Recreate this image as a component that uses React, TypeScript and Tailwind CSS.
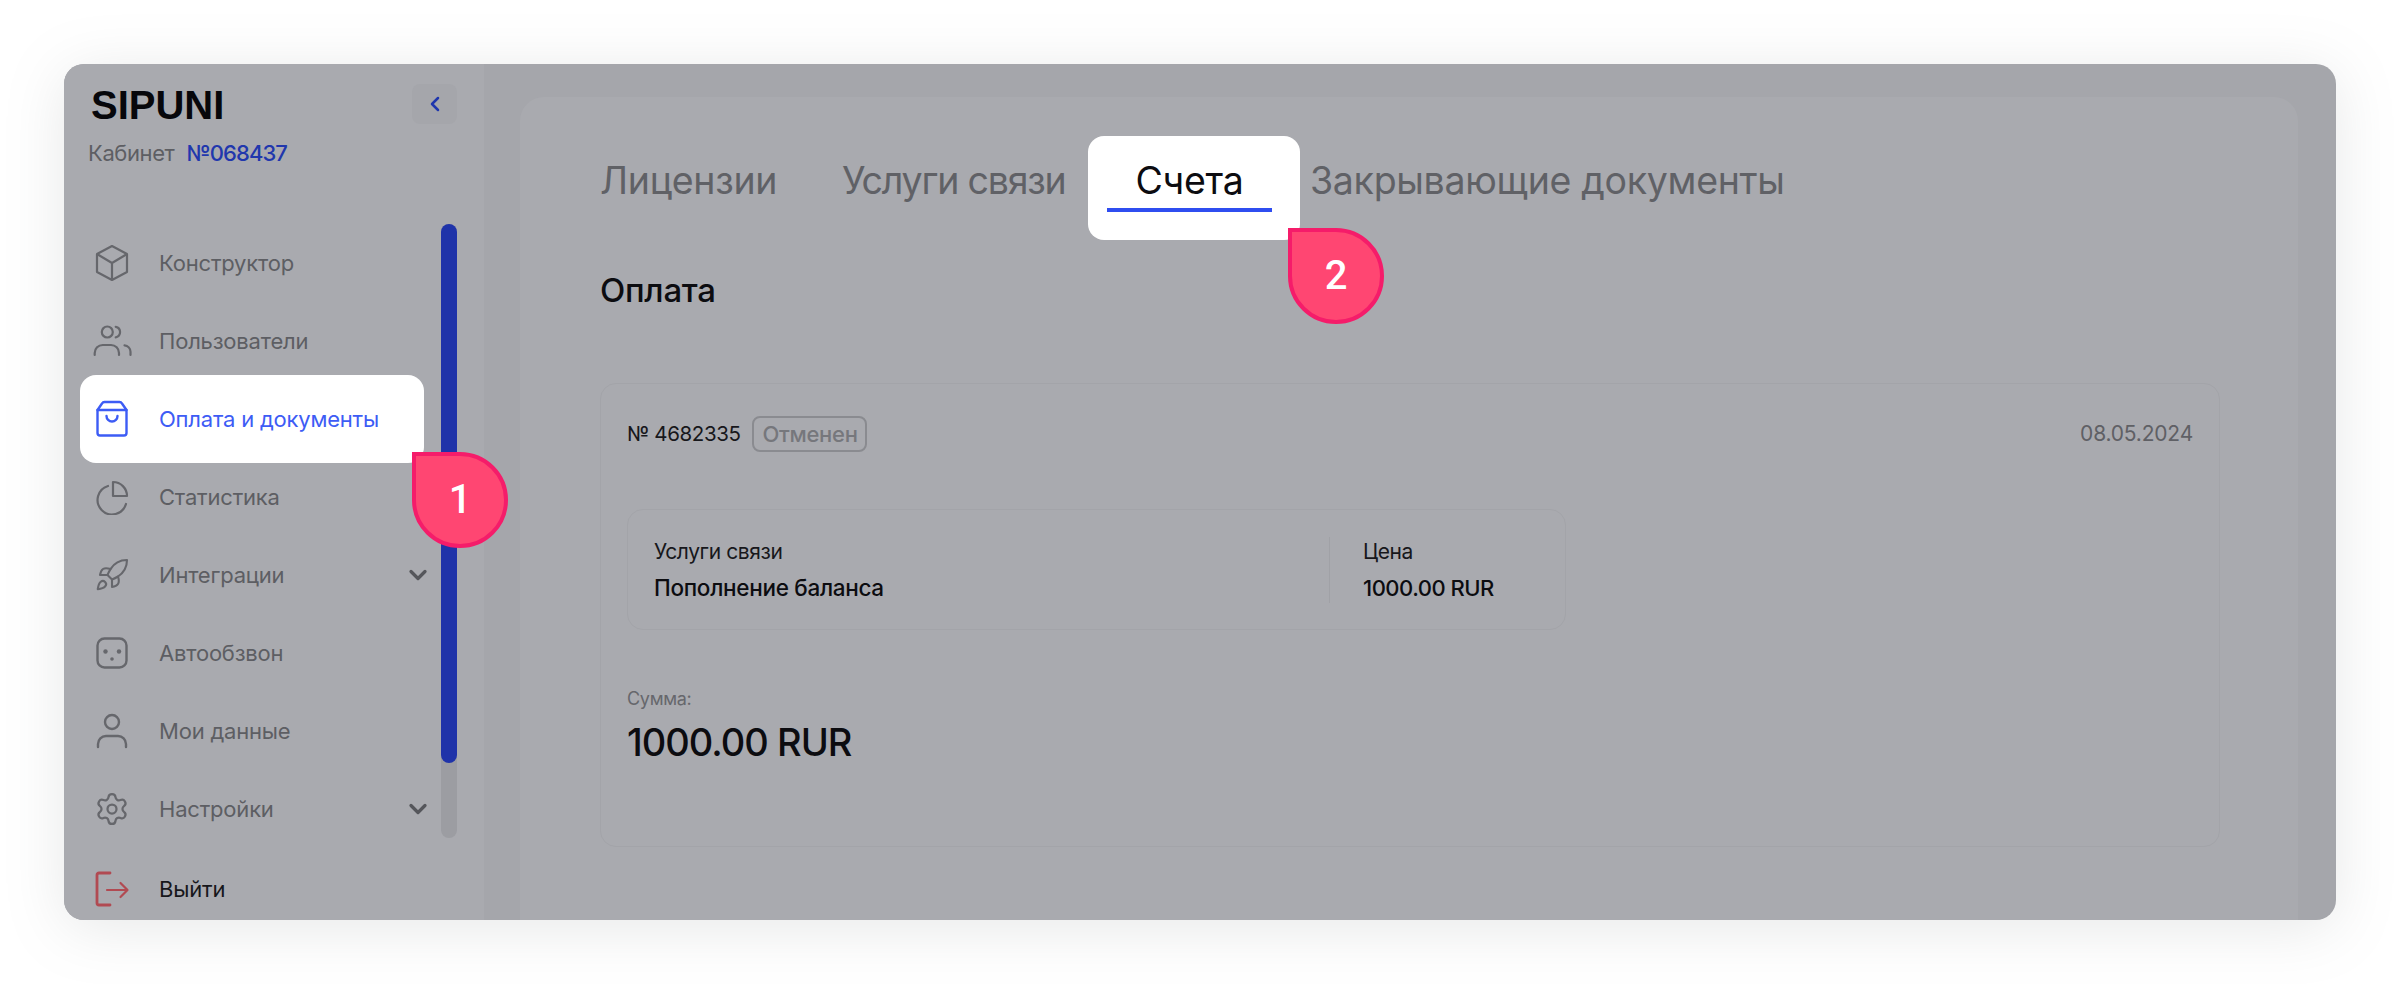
import React from 'react';
import { Rocket, Settings, ChevronDown, ChevronLeft } from 'lucide-react';

const GRAY = '#66676c';

const CubeIcon = () => (
  <svg width="36" height="38" viewBox="0 0 36 38" fill="none" stroke={GRAY} strokeWidth="2.2" strokeLinejoin="round">
    <path d="M18 2 L33 10 V28 L18 36 L3 28 V10 Z" />
    <path d="M3 10 L18 19 L33 10 M18 19 V36" />
  </svg>
);

const UsersIcon = () => (
  <svg width="40" height="36" viewBox="0 0 40 36" fill="none" stroke={GRAY} strokeWidth="2.2" strokeLinecap="round">
    <circle cx="15.3" cy="9" r="5.5" />
    <path d="M23.7 3.8 a5.4 5.4 0 0 1 0 10.6" />
    <path d="M2.7 32 v-2 a8 8 0 0 1 8-8 h8.3 a8 8 0 0 1 8 8 v2" />
    <path d="M32.5 22.3 a6.5 6.5 0 0 1 6 6.5 v3.2" />
  </svg>
);

const BagIcon = () => (
  <svg width="36" height="40" viewBox="0 0 36 40" fill="none" stroke="#3d5cf5" strokeWidth="2.4" strokeLinejoin="round" strokeLinecap="round">
    <path d="M3.5 11 H32.5 V34 a2.5 2.5 0 0 1 -2.5 2.5 H6 a2.5 2.5 0 0 1 -2.5 -2.5 Z" />
    <path d="M3.5 11 L8 4.5 a3 3 0 0 1 2.5 -1.5 H25.500 a3 3 0 0 1 2.500 1.500 L32.500 11" />
    <path d="M12.500 17 a5.500 5.500 0 0 0 11 0" />
  </svg>
);

const PieIcon = () => (
  <svg width="36" height="36" viewBox="0 0 36 36" fill="none" stroke={GRAY} strokeWidth="2.2" strokeLinejoin="round" strokeLinecap="round">
    <path d="M19 3 a14 14 0 0 1 14 14 H19 Z" />
    <path d="M14 7 a14.500 14.500 0 1 0 18 18" />
  </svg>
);

const SocketIcon = () => (
  <svg width="36" height="36" viewBox="0 0 36 36" fill="none" stroke={GRAY} strokeWidth="2.4">
    <rect x="3.500" y="3.500" width="29" height="29" rx="7" />
    <circle cx="11.500" cy="16.500" r="2.200" fill={GRAY} stroke="none" />
    <circle cx="25" cy="16.500" r="2.200" fill={GRAY} stroke="none" />
    <circle cx="18" cy="24" r="1.800" fill={GRAY} stroke="none" />
  </svg>
);

const UserIcon = () => (
  <svg width="36" height="38" viewBox="0 0 36 38" fill="none" stroke={GRAY} strokeWidth="2.400" strokeLinecap="round">
    <circle cx="18" cy="10" r="7" />
    <path d="M4 35 v-3 a8 8 0 0 1 8-8 h12 a8 8 0 0 1 8 8 v3" />
  </svg>
);

const LogoutIcon = () => (
  <svg width="38" height="38" viewBox="0 0 38 38" fill="none" stroke="#b14a52" strokeLinecap="round" strokeLinejoin="round">
    <path d="M17 3 H6 a2 2 0 0 0 -2 2 V33 a2 2 0 0 0 2 2 H17" strokeWidth="2.800" />
    <path d="M14 20 H34 M27.500 13 L34.500 20 L27.500 27" strokeWidth="2.200" />
  </svg>
);

const navItems = [
  { label: 'Конструктор', icon: <CubeIcon /> },
  { label: 'Пользователи', icon: <UsersIcon /> },
  { label: 'Оплата и документы', icon: <BagIcon />, active: true },
  { label: 'Статистика', icon: <PieIcon /> },
  { label: 'Интеграции', icon: <Rocket size={36} strokeWidth={1.4} color={GRAY} />, more: true },
  { label: 'Автообзвон', icon: <SocketIcon /> },
  { label: 'Мои данные', icon: <UserIcon /> },
  { label: 'Настройки', icon: <Settings size={36} strokeWidth={1.5} color={GRAY} />, more: true },
];

const Marker: React.FC<{ n: number; className: string }> = ({ n, className }) => (
  <div
    className={`absolute z-10 flex h-24 w-24 items-center justify-center rounded-full rounded-tl-none border-4 border-[#f51c6a] bg-[#ff4672] text-[40px] font-medium text-white font-['Roboto',sans-serif] ${className}`}
  >
    {n}
  </div>
);

const Sidebar: React.FC = () => (
  <aside className="relative flex w-[420px] shrink-0 flex-col bg-[#a9aaaf]">
    <div className="flex items-start justify-between pl-[27px] pr-[27px] pt-[17px]">
      <span className="text-[40px] font-bold leading-[48px] text-[#07070b] font-['Liberation_Sans',sans-serif]">
        SIPUNI
      </span>
      <button className="mt-[3px] flex h-10 w-[45px] items-center justify-center rounded-lg bg-[#a5a6ab] text-[#1f36ad]">
        <ChevronLeft size={24} strokeWidth={2.500} />
      </button>
    </div>
    <div className="mx-6 mt-[12px] flex items-center gap-3 text-[22px] leading-6">
      <span className="tracking-[-0.4px] text-[#5d5e63]">Кабинет</span>
      <span className="font-medium tracking-[-0.9px] text-[#2137ad]">№068437</span>
    </div>
    <div className="mx-6 mt-[32px] h-px bg-[#93949a]" />
    <div className="mt-[27px] flex pl-4 pr-[27px]">
      <nav className="w-[344px]">
        {navItems.map((item) => (
          <div
            key={item.label}
            className={
              item.active
                ? 'relative -my-[5px] flex h-[88px] items-center rounded-2xl bg-white pl-3 text-[#3d5cf5]'
                : 'flex h-[78px] items-center pl-3 text-[#5d5e63]'
            }
          >
            <div className="flex w-10 justify-center">{item.icon}</div>
            <span className="ml-[27px] flex-1 text-[22px] tracking-[-0.2px]">{item.label}</span>
            {item.more && <ChevronDown size={28} strokeWidth={2.800} className="-mr-2 text-[#55565b]" />}
          </div>
        ))}
        <div className="mt-[2px] flex h-[78px] items-center pl-3 text-[#17171b]">
          <div className="flex w-10 justify-center">
            <LogoutIcon />
          </div>
          <span className="ml-[27px] text-[22px] tracking-[-0.2px]">Выйти</span>
        </div>
      </nav>
      <div className="ml-[17px] h-[614px] w-4 shrink-0 rounded-full bg-[#9c9da2]">
        <div className="h-[539px] rounded-full bg-[#1f33a9]" />
      </div>
    </div>
  </aside>
);

const Tabs: React.FC = () => (
  <div className="flex h-[104px] items-start text-[37.500px] leading-[42px] tracking-[-0.3px] text-[#606166]">
    <span className="w-[242px] pt-6">Лицензии</span>
    <span className="w-[246px] whitespace-nowrap pt-6 tracking-[-1.2px]">Услуги связи</span>
    <div className="flex h-[104px] w-[212px] flex-col items-center rounded-2xl bg-white pr-[9px] pt-6 text-[#0c0c10]">
      <span>Счета</span>
      <div className="mt-[6px] h-1 w-[165px] bg-[#2f4df0]" />
    </div>
    <span className="ml-[10px] whitespace-nowrap pt-6">Закрывающие документы</span>
  </div>
);

const Invoice: React.FC = () => (
  <div className="mt-[76px] h-[464px] rounded-2xl border border-[#a3a4a9] px-[26px] pt-[32px]">
    <div className="flex items-center justify-between">
      <div className="flex items-center gap-3">
        <span className="text-[20.500px] tracking-[-0.4px] text-[#17171b]">№ 4682335</span>
        <span className="flex h-9 w-[115px] items-center justify-center rounded-lg border-2 border-[#8a8b90] text-[22px] font-medium tracking-[-0.3px] text-[#76777c]">
          Отменен
        </span>
      </div>
      <span className="text-[21px] tracking-[-0.2px] text-[#5f6065]">08.05.2024</span>
    </div>
    <div className="mt-[57px] flex h-[121px] w-[939px] items-center rounded-2xl border border-[#a3a4a9] pl-[26px]">
      <div className="flex h-[66px] w-[676px] flex-col justify-between border-r border-[#a0a1a6] py-[3px]">
        <span className="text-[21px] leading-6 tracking-[-0.4px] text-[#17171b]">Услуги связи</span>
        <span className="text-[22.500px] font-medium leading-6 tracking-[-0.3px] text-[#0c0c10]">Пополнение баланса</span>
      </div>
      <div className="ml-[33px] flex h-[66px] flex-col justify-between py-[3px]">
        <span className="text-[21px] leading-6 tracking-[-0.4px] text-[#17171b]">Цена</span>
        <span className="text-[22px] font-medium leading-6 tracking-[-0.5px] text-[#0c0c10]">1000.00 RUR</span>
      </div>
    </div>
    <div className="mt-[57px] text-[18px] leading-6 tracking-[-0.3px] text-[#66676c]">Сумма:</div>
    <div className="mt-[7px] text-[38px] font-medium leading-[48px] tracking-[-1px] text-[#0c0c10]">1000.00 RUR</div>
  </div>
);

export default function App() {
  return (
    <div className="relative h-[984px] overflow-hidden bg-white p-16 font-['Inter',sans-serif]">
      <div className="flex h-[856px] w-[2272px] overflow-hidden rounded-[20px] bg-[#a5a6ab] shadow-[0_8px_60px_rgba(120,130,130,0.18)]">
        <Sidebar />
        <main className="flex-1 pl-9 pr-[38px] pt-[33px]">
          <section className="h-[900px] rounded-3xl bg-[#a9aaaf] pl-20 pr-[78px] pt-[39px]">
            <Tabs />
            <h2 className="mt-[33px] text-[33px] font-medium leading-[34px] tracking-[-0.3px] text-[#0c0c10]">Оплата</h2>
            <Invoice />
          </section>
        </main>
      </div>
      <Marker n={1} className="left-[412px] top-[452px]" />
      <Marker n={2} className="left-[1288px] top-[228px]" />
    </div>
  );
}
